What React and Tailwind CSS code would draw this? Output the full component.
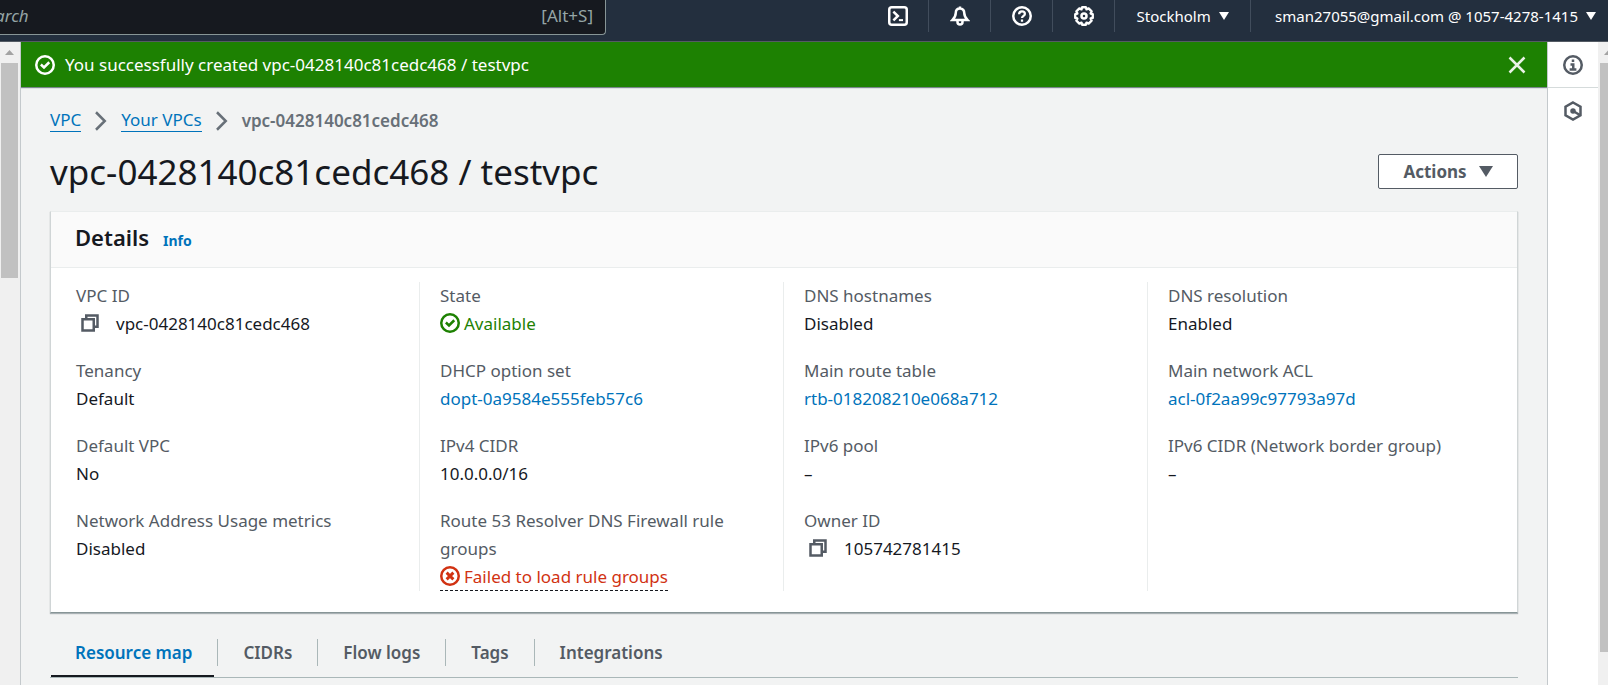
import React from "react";

const stroke = { fill: "none", stroke: "currentColor", strokeWidth: 2 };

function Icon({ children, className = "size-5" }) {
  return (
    <svg viewBox="0 0 16 16" aria-hidden="true" className={`shrink-0 ${className}`} {...stroke}>
      {children}
    </svg>
  );
}

const SuccessIcon = () => (
  <Icon>
    <circle cx="8" cy="8" r="7" />
    <path d="M4.700 7.600 7.200 10l4.200-4.200" />
  </Icon>
);

const ErrorIcon = () => (
  <Icon>
    <circle cx="8" cy="8" r="7" />
    <path d="m5.300 5.300 5.400 5.400M10.700 5.300l-5.400 5.400" strokeWidth="2.300" />
  </Icon>
);

const CopyIcon = () => (
  <Icon>
    <path d="M2 5h9v9H2z" />
    <path d="M5 5V2h9v9h-3" />
  </Icon>
);

const Caret = ({ className }) => (
  <svg viewBox="0 0 10 8" preserveAspectRatio="none" aria-hidden="true" className={`shrink-0 fill-current ${className}`}>
    <path d="M0 0h10L5 8z" />
  </svg>
);

const Chevron = () => (
  <Icon>
    <path d="m4 1 7 7-7 7" />
  </Icon>
);

const utilities = [
  {
    label: "CloudShell",
    icon: (
      <>
        <rect x="1" y="1" width="14" height="14" rx="2" />
        <path d="m4.300 4.500 3.600 3.500-3.600 3.500" />
        <path d="M8.700 11.300h3.300" strokeWidth="1.600" />
      </>
    ),
  },
  {
    label: "Notifications",
    icon: (
      <>
        <path d="M8 .4v2M8 2C5.600 2 4.600 3.700 4.600 5.500c0 2.700-1 3.900-2.700 5.700h12.200c-1.700-1.800-2.700-3-2.700-5.700C11.400 3.700 10.400 2 8 2z" />
        <path d="M6 11.500v1.300a2 2 0 0 0 4 0v-1.300" />
      </>
    ),
  },
  {
    label: "Help",
    icon: (
      <>
        <circle cx="8" cy="8" r="7" />
        <path d="M5.700 6.500C5.700 5 6.700 4.300 8 4.300s2.300.8 2.300 2C10.300 7.800 8 7.900 8 9.700M8 10.700v1.800" strokeWidth="1.800" />
      </>
    ),
  },
  {
    label: "Settings",
    icon: (
      <>
        <path
          d="M6.500 1h3l.5 1.700 1.700-.8 2.400 2.400-.8 1.700 1.700.5v3l-1.700.5.8 1.700-2.400 2.400-1.700-.8-.5 1.700h-3L6 13.300l-1.700.8-2.400-2.400.8-1.700L1 9.500v-3L2.700 6l-.8-1.700 2.400-2.400 1.700.8z"
          strokeLinejoin="round"
          strokeWidth="1.900"
        />
        <circle cx="8" cy="8" r="2" />
      </>
    ),
  },
];

const Copyable = ({ children }) => (
  <span className="flex items-center">
    <button type="button" aria-label="Copy" className="mr-4 ml-1 text-[#545b64]">
      <CopyIcon />
    </button>
    {children}
  </span>
);

const ResourceLink = ({ children }) => (
  <a href="#" className="text-[#0073bb]">
    {children}
  </a>
);

const columns = [
  [
    ["VPC ID", <Copyable>vpc-0428140c81cedc468</Copyable>],
    ["Tenancy", "Default"],
    ["Default VPC", "No"],
    ["Network Address Usage metrics", "Disabled"],
  ],
  [
    [
      "State",
      <span className="flex items-center gap-1 text-[#1d8102]">
        <SuccessIcon />
        Available
      </span>,
    ],
    ["DHCP option set", <ResourceLink>dopt-0a9584e555feb57c6</ResourceLink>],
    ["IPv4 CIDR", "10.0.0.0/16"],
    [
      "Route 53 Resolver DNS Firewall rule groups",
      <span className="flex w-fit items-center gap-1 border-b border-dashed border-[#16191f] text-[#d13212]">
        <ErrorIcon />
        Failed to load rule groups
      </span>,
    ],
  ],
  [
    ["DNS hostnames", "Disabled"],
    ["Main route table", <ResourceLink>rtb-018208210e068a712</ResourceLink>],
    ["IPv6 pool", "–"],
    ["Owner ID", <Copyable>105742781415</Copyable>],
  ],
  [
    ["DNS resolution", "Enabled"],
    ["Main network ACL", <ResourceLink>acl-0f2aa99c97793a97d</ResourceLink>],
    ["IPv6 CIDR (Network border group)", "–"],
  ],
];

const tabs = ["Resource map", "CIDRs", "Flow logs", "Tags", "Integrations"];

function TopNav() {
  return (
    <header className="flex h-[42px] shrink-0 items-start border-b border-[#545b64] bg-[#232f3e] text-[15px] text-white">
      <div className="flex h-[35px] w-[606px] shrink-0 items-center overflow-hidden rounded-br-sm border-r border-b border-[#879596] bg-[#16191f] pr-3 pb-[2px] text-[17px] text-[#95a5a6]">
        <input
          type="search"
          aria-label="Search"
          placeholder="Search"
          className="-ml-[22px] min-w-0 flex-1 bg-transparent italic outline-none placeholder:text-[#95a5a6]"
        />
        <span>[Alt+S]</span>
      </div>
      <nav aria-label="Utilities" className="ml-auto flex h-8 items-center">
        {utilities.map(({ label, icon }) => (
          <button
            key={label}
            type="button"
            aria-label={label}
            className="flex h-8 w-[62px] items-center justify-center border-r border-[#414d5c]"
          >
            <Icon>{icon}</Icon>
          </button>
        ))}
        <button type="button" className="flex h-8 w-[136px] items-center justify-center gap-2 border-r border-[#414d5c]">
          Stockholm
          <Caret className="h-2 w-[10px]" />
        </button>
        <button type="button" className="flex h-8 items-center gap-2 pr-3 pl-6">
          sman27055@gmail.com @ 1057-4278-1415
          <Caret className="h-2 w-[10px]" />
        </button>
      </nav>
    </header>
  );
}

function Scrollbar({ className, thumb }) {
  return (
    <div aria-hidden="true" className={`flex shrink-0 flex-col overflow-hidden bg-[#f0f0f0] ${className}`}>
      <span className="flex h-[21px] w-[17px] shrink-0 items-center justify-center text-[#a3a3a3]">
        <Caret className="h-[5px] w-[9px] rotate-180" />
      </span>
      <span className={`w-[17px] bg-[#c1c1c1] ${thumb}`} />
    </div>
  );
}

function Details() {
  return (
    <section className="mt-[17px] border-x border-t border-b border-x-[#d0d5d6] border-t-[#eaeded] border-b-[#879596] bg-white shadow-[0_1px_1px_0_rgba(0,28,36,0.3)]">
      <div className="flex h-14 items-baseline gap-[14px] border-b border-[#eaeded] bg-[#fafafa] px-6 pt-[11px]">
        <h2 className="text-[22px] leading-[28px] font-semibold">Details</h2>
        <a href="#" className="text-sm font-bold text-[#0073bb]">
          Info
        </a>
      </div>
      <div className="grid grid-cols-4 px-[5px] pt-[14px] pb-[21px]">
        {columns.map((items, i) => (
          <dl key={i} className="flex flex-col gap-5 border-r border-[#eaeded] px-5 last:border-r-0">
            {items.map(([label, value]) => (
              <div key={label}>
                <dt className="leading-[28px] text-[#545b64]">{label}</dt>
                <dd className="leading-[27px]">{value}</dd>
              </div>
            ))}
          </dl>
        ))}
      </div>
    </section>
  );
}

export default function App() {
  return (
    <div className="flex h-screen flex-col overflow-hidden bg-[#f2f3f3] font-['Noto_Sans','Open_Sans',sans-serif] text-[17px] text-[#16191f]">
      <TopNav />
      <div className="flex min-h-0 flex-1">
        <Scrollbar className="w-5 pl-px" thumb="h-[215px]" />
        <main className="min-w-0 flex-1 overflow-hidden border-x border-[#c4c9cc] bg-[#f2f3f3]">
          <div
            role="status"
            className="flex h-[45px] items-center gap-[10px] bg-[#1d8102] pr-5 pl-[14px] text-white shadow-[0_1px_1px_0_rgba(0,28,36,0.5)]"
          >
            <SuccessIcon />
            <p className="flex-1">You successfully created vpc-0428140c81cedc468 / testvpc</p>
            <button type="button" aria-label="Dismiss" className="text-[#e9f2e6]">
              <Icon>
                <path d="m2 2 12 12M14 2 2 14" />
              </Icon>
            </button>
          </div>
          <div className="px-[29px] pt-[21px]">
            <nav aria-label="Breadcrumb">
              <ol className="flex items-center gap-[10px]">
                <li className="flex items-center gap-[10px]">
                  <a href="#" className="border-b border-[#0073bb] leading-[22px] text-[#0073bb]">
                    VPC
                  </a>
                  <span className="text-[#687078]">
                    <Chevron />
                  </span>
                </li>
                <li className="flex items-center gap-[10px]">
                  <a href="#" className="border-b border-[#0073bb] leading-[22px] text-[#0073bb]">
                    Your VPCs
                  </a>
                  <span className="text-[#687078]">
                    <Chevron />
                  </span>
                </li>
                <li aria-current="page" className="font-semibold text-[#687078]">
                  vpc-0428140c81cedc468
                </li>
              </ol>
            </nav>
            <div className="mt-4 flex items-center justify-between">
              <h1 className="text-[35px] leading-[44px]">vpc-0428140c81cedc468 / testvpc</h1>
              <button
                type="button"
                className="flex h-[35px] w-[140px] items-center justify-center gap-3 rounded-xs border border-[#545b64] bg-white font-bold text-[#545b64]"
              >
                Actions
                <Caret className="h-[11px] w-[14px]" />
              </button>
            </div>
            <Details />
            <div role="tablist" className="mt-[22px] flex border-b border-[#aab7b8]">
              {tabs.map((tab, i) => (
                <button
                  key={tab}
                  type="button"
                  role="tab"
                  aria-selected={i === 0}
                  className="group flex flex-col font-semibold text-[#545b64] aria-selected:text-[#0073bb]"
                >
                  <span className="mt-1 mb-[9px] border-r border-[#aab7b8] px-[25px] leading-[27px] group-last:border-r-0">
                    {tab}
                  </span>
                  <span className="mr-1 ml-px h-[2px] self-stretch group-aria-selected:bg-[#16191f]" />
                </button>
              ))}
            </div>
          </div>
        </main>
        <aside aria-label="Tools" className="flex w-[50px] shrink-0 flex-col bg-white text-[#545b64]">
          <button type="button" aria-label="Info" className="flex h-[46px] items-center justify-center border-b border-[#d5dbdb]">
            <Icon>
              <circle cx="8" cy="8" r="7" />
              <path d="M7 4.500h2M6 7.500h2.200v4M5.300 11.500h5.400" />
            </Icon>
          </button>
          <button type="button" aria-label="Diagnostics" className="flex h-[46px] items-center justify-center">
            <Icon>
              <path d="M8 1.200 14 4.600v6.800L8 14.800l-6-3.400V4.600z" />
              <circle cx="8" cy="8" r="2.200" fill="currentColor" stroke="none" />
              <path d="m8 8 5.500 3.200" />
            </Icon>
          </button>
        </aside>
        <Scrollbar className="w-[10px] pl-[2px]" thumb="h-[589px]" />
      </div>
    </div>
  );
}
